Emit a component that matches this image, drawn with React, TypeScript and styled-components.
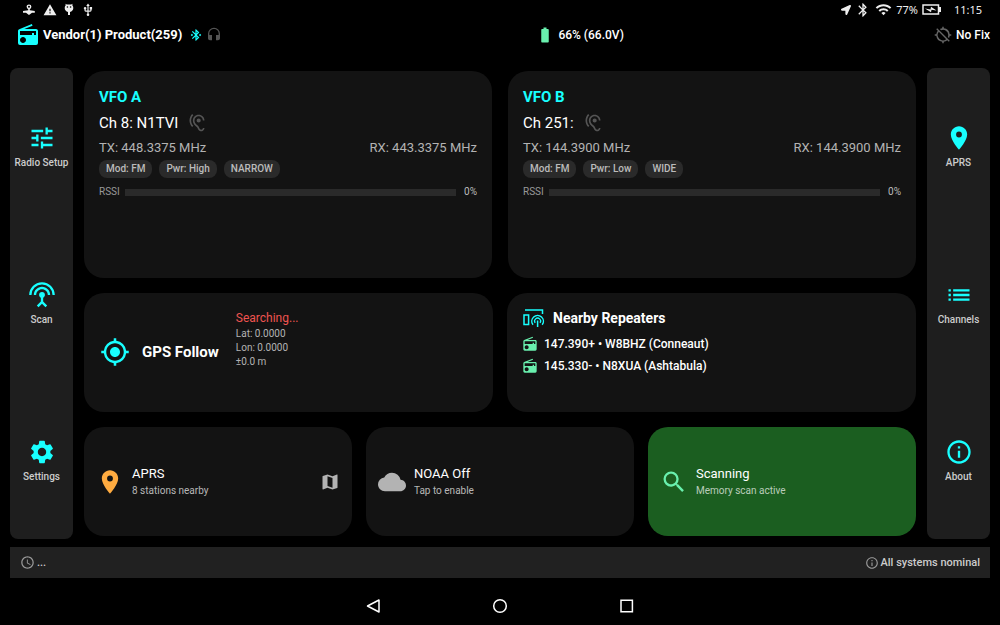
import React from "react";
import styled, { createGlobalStyle } from "styled-components";
import {
  MdRadio, MdBluetoothConnected, MdHeadset, MdLocationDisabled, MdTune, MdSettingsInputAntenna,
  MdSettings, MdLocationOn, MdList, MdInfoOutline, MdHearing, MdMyLocation, MdMap, MdCloud,
  MdSearch, MdSchedule, MdBatteryFull, MdBluetooth, MdWifi, MdWarning, MdUsb,
} from "react-icons/md";
import { FaLocationArrow } from "react-icons/fa";
import type { IconType } from "react-icons";

const cyan = "#18ffff";
const mint = "#69f0ae";

const GlobalStyle = createGlobalStyle`
  * { box-sizing: border-box; }
  body { margin: 0; background: #000; color: #fff; font-family: Roboto, sans-serif; }
  button { border: 0; padding: 0; margin: 0; font: inherit; color: inherit; background: none; text-align: left; cursor: pointer; }
  svg { display: block; flex: none; }
  h2, p { margin: 0; }
`;

const Screen = styled.div`
  min-height: 100vh;
  display: flex;
  flex-direction: column;
`;

const SystemBar = styled.div`
  height: 19px;
  padding: 0 18px 0 22px;
  display: flex;
  align-items: center;
  justify-content: space-between;
  font-family: "Noto Sans", sans-serif;
  font-size: 11px;
  color: #eee;
`;

const SystemGroup = styled.div<{ $gap: number }>`
  display: flex;
  align-items: center;
  gap: ${(p) => p.$gap}px;
`;

const Clock = styled.span`
  margin-left: 8px;
`;

const Header = styled.header`
  height: 31px;
  padding: 0 10px 0 16px;
  display: flex;
  align-items: center;
  justify-content: space-between;
`;

const HeaderGroup = styled.div<{ $gap: number }>`
  display: flex;
  align-items: center;
  gap: ${(p) => p.$gap}px;
  font-size: 12px;
  font-weight: 500;
`;

const Device = styled(HeaderGroup)`
  padding-right: 4px;
`;

const DeviceName = styled.span`
  font-size: 13px;
  font-weight: 700;
  margin-right: 4px;
`;

const Body = styled.div`
  flex: 1;
  display: flex;
  gap: 11px;
  padding: 18px 10px 8px;
`;

const Rail = styled.nav`
  width: 63px;
  flex: none;
  display: flex;
  flex-direction: column;
  border-radius: 8px;
  background: #1e1e1e;
`;

const RailButton = styled.button`
  flex: 1;
  display: flex;
  flex-direction: column;
  align-items: center;
  justify-content: center;
  gap: 4px;
  font-size: 10px;
  line-height: 14px;
  font-weight: 500;
  color: #ccc;
  svg { color: ${cyan}; }
`;

const Board = styled.main`
  flex: 1;
  min-width: 0;
  padding: 3px 0;
  display: grid;
  grid-template-rows: 19fr 11fr 10fr;
  gap: 15px;
`;

const BoardRow = styled.div<{ $columns: number; $gap: number }>`
  display: grid;
  grid-template-columns: repeat(${(p) => p.$columns}, minmax(0, 1fr));
  gap: ${(p) => p.$gap}px;
`;

const Card = styled.section`
  border-radius: 20px;
  background: #131313;
  padding: 16px 15px;
`;

const VfoTitle = styled.h2`
  font-size: 15px;
  line-height: 20px;
  font-weight: 700;
  color: ${cyan};
`;

const Channel = styled.div`
  display: flex;
  align-items: center;
  gap: 9px;
  height: 31px;
  font-size: 15px;
  svg { color: #555; }
`;

const Frequencies = styled.div`
  display: flex;
  justify-content: space-between;
  font-size: 13px;
  line-height: 20px;
  color: #b3b3b3;
`;

const Chips = styled.div`
  display: flex;
  gap: 7px;
  margin-top: 2px;
`;

const Chip = styled.span`
  padding: 0 7px;
  border-radius: 8px;
  background: #2a2a2a;
  font-size: 10px;
  line-height: 18px;
  font-weight: 500;
  color: #bbb;
`;

const Signal = styled.div`
  display: flex;
  align-items: center;
  margin-top: 6px;
  font-size: 10px;
  line-height: 16px;
  color: #999;
`;

const SignalTrack = styled.div`
  flex: 1;
  height: 7px;
  margin: 0 8px 0 5px;
  background: #2a2a2a;
`;

const SignalFill = styled.div`
  height: 100%;
  background: ${mint};
`;

const SignalValue = styled.span`
  color: #bbb;
`;

const GpsCard = styled.button`
  display: flex;
  align-items: center;
  padding: 16px;
  border-radius: 20px;
  background: #131313;
`;

const GpsTitle = styled.span`
  margin: 0 17px 0 12px;
  font-size: 15px;
  font-weight: 700;
`;

const GpsDetails = styled.span`
  align-self: flex-start;
  display: flex;
  flex-direction: column;
  font-size: 10px;
  line-height: 14px;
  color: #b3b3b3;
`;

const GpsState = styled.span`
  font-size: 12px;
  line-height: 18px;
  color: #ef5350;
`;

const RepeaterHeading = styled.div`
  display: flex;
  align-items: center;
  gap: 8px;
  height: 18px;
  margin-bottom: 6px;
`;

const RepeaterTitle = styled.h2`
  font-size: 14px;
  line-height: 18px;
  font-weight: 700;
`;

const Repeater = styled.div`
  display: flex;
  align-items: center;
  gap: 6px;
  height: 22px;
  font-size: 12px;
  font-weight: 500;
  svg { color: ${mint}; }
`;

const Tile = styled.button<{ $active?: boolean }>`
  display: flex;
  align-items: center;
  gap: 8px;
  padding: 0 12px;
  border-radius: 20px;
  background: ${(p) => (p.$active ? "#1b5e20" : "#131313")};
`;

const TileText = styled.span`
  flex: 1;
  display: flex;
  flex-direction: column;
`;

const TileTitle = styled.span`
  font-size: 13px;
  line-height: 18px;
`;

const TileNote = styled.span`
  font-size: 10px;
  line-height: 16px;
  color: rgba(255, 255, 255, 0.7);
`;

const Footer = styled.footer`
  height: 31px;
  margin: 0 10px;
  padding: 0 10px;
  display: flex;
  align-items: center;
  justify-content: space-between;
  background: #212121;
  font-size: 11px;
  font-weight: 500;
  color: #ccc;
`;

const FooterItem = styled.div`
  display: flex;
  align-items: center;
  gap: 2px;
  svg { color: #999; }
`;

const SystemNav = styled.nav`
  height: 47px;
  padding-top: 8px;
  display: flex;
  justify-content: center;
  gap: 107px;
`;

const NavButton = styled.button`
  width: 20px;
  height: 40px;
  display: flex;
  align-items: center;
  justify-content: center;
`;

function RepeaterIcon() {
  return (
    <svg width="23" height="18" viewBox="0 0 23 18" fill="none" stroke={cyan} strokeWidth="1.500" aria-hidden="true">
      <path d="M3 1h17.500v4" />
      <path d="M2 6h4.600v9.500H2z" />
      <path d="M11 15.800a5.800 5.800 0 1 1 9.200 0" />
      <path d="M13.200 13.900a3 3 0 1 1 4.800 0" strokeWidth="1.300" />
      <path d="M15.600 11.500v6.500" />
    </svg>
  );
}

function DebugIcon() {
  return (
    <svg width="14" height="12" viewBox="0 0 14 12" aria-hidden="true">
      <circle cx="7" cy="2.800" r="1.700" fill="none" stroke="#eee" strokeWidth="1.400" />
      <path d="M6.200 4h1.600v2.300l5 .7v1.800H10L7 11 4 8.800H1V7l5.200-.7z" fill="#eee" />
    </svg>
  );
}

function AndroidHeadIcon() {
  return (
    <svg width="10" height="13" viewBox="0 0 10 13" aria-hidden="true">
      <path d="M1.500.8l1.300.7h4.400l1.300-.7-.2 1.500C9 3 9.300 4 9.300 5c0 2-1.400 3.600-3.300 3.900V12H4V8.900C2.100 8.600.7 7 .7 5c0-1 .3-2 1-2.700z" fill="#eee" />
      <circle cx="3.400" cy="4" r=".8" fill="#000" />
      <circle cx="6.600" cy="4" r=".8" fill="#000" />
    </svg>
  );
}

function ChargingIcon() {
  return (
    <svg width="20" height="11" viewBox="0 0 20 11" fill="none" aria-hidden="true">
      <path d="M1 1h15.500v9H1z" stroke="#eee" strokeWidth="1.500" />
      <path d="M18 3v5" stroke="#eee" strokeWidth="2" />
      <path d="M3 4.500l5.500 1 .5-2.700 5.500 3.700-5-.8-.5 2.500z" fill="#eee" />
    </svg>
  );
}

interface RailItem { label: string; icon: IconType }

const leftItems: RailItem[] = [
  { label: "Radio Setup", icon: MdTune },
  { label: "Scan", icon: MdSettingsInputAntenna },
  { label: "Settings", icon: MdSettings },
];
const rightItems: RailItem[] = [
  { label: "APRS", icon: MdLocationOn },
  { label: "Channels", icon: MdList },
  { label: "About", icon: MdInfoOutline },
];

function SideRail({ items, name }: { items: RailItem[]; name: string }) {
  return (
    <Rail aria-label={name}>
      {items.map(({ label, icon: Icon }) => (
        <RailButton key={label} type="button">
          <Icon size={28} />
          {label}
        </RailButton>
      ))}
    </Rail>
  );
}

interface VfoProps { name: string; channel: string; tx: string; rx: string; chips: string[]; rssi: number }

function Vfo({ name, channel, tx, rx, chips, rssi }: VfoProps) {
  return (
    <Card>
      <VfoTitle>{name}</VfoTitle>
      <Channel>{channel}<MdHearing size={20} /></Channel>
      <Frequencies><span>TX: {tx} MHz</span><span>RX: {rx} MHz</span></Frequencies>
      <Chips>{chips.map((c) => <Chip key={c}>{c}</Chip>)}</Chips>
      <Signal>
        RSSI
        <SignalTrack role="progressbar" aria-label="RSSI" aria-valuenow={rssi}>
          <SignalFill style={{ width: `${rssi}%` }} />
        </SignalTrack>
        <SignalValue>{rssi}%</SignalValue>
      </Signal>
    </Card>
  );
}

export default function App() {
  return (
    <Screen>
      <GlobalStyle />
      <SystemBar>
        <SystemGroup $gap={7}>
          <DebugIcon />
          <MdWarning size={14} />
          <AndroidHeadIcon />
          <MdUsb size={14} />
        </SystemGroup>
        <SystemGroup $gap={4}>
          <FaLocationArrow size={10} />
          <MdBluetooth size={16} />
          <MdWifi size={17} />
          <span>77%</span>
          <ChargingIcon />
          <Clock>11:15</Clock>
        </SystemGroup>
      </SystemBar>
      <Header>
        <Device $gap={3}>
          <MdRadio size={24} color={cyan} />
          <DeviceName>Vendor(1) Product(259)</DeviceName>
          <MdBluetoothConnected size={14} color={cyan} />
          <MdHeadset size={16} color="#555" />
        </Device>
        <HeaderGroup $gap={4}>
          <MdBatteryFull size={18} color={mint} />
          66% (66.0V)
        </HeaderGroup>
        <HeaderGroup $gap={4}>
          <MdLocationDisabled size={18} color="#666" />
          No Fix
        </HeaderGroup>
      </Header>
      <Body>
        <SideRail items={leftItems} name="Radio" />
        <Board>
          <BoardRow $columns={2} $gap={16}>
            <Vfo name="VFO A" channel="Ch 8: N1TVI" tx="448.3375" rx="443.3375" chips={["Mod: FM", "Pwr: High", "NARROW"]} rssi={0} />
            <Vfo name="VFO B" channel="Ch 251:" tx="144.3900" rx="144.3900" chips={["Mod: FM", "Pwr: Low", "WIDE"]} rssi={0} />
          </BoardRow>
          <BoardRow $columns={2} $gap={14}>
            <GpsCard type="button">
              <MdMyLocation size={30} color={cyan} />
              <GpsTitle>GPS Follow</GpsTitle>
              <GpsDetails>
                <GpsState>Searching...</GpsState>
                <span>Lat: 0.0000</span>
                <span>Lon: 0.0000</span>
                <span>±0.0 m</span>
              </GpsDetails>
            </GpsCard>
            <Card>
              <RepeaterHeading>
                <RepeaterIcon />
                <RepeaterTitle>Nearby Repeaters</RepeaterTitle>
              </RepeaterHeading>
              <Repeater><MdRadio size={16} />147.390+ • W8BHZ (Conneaut)</Repeater>
              <Repeater><MdRadio size={16} />145.330- • N8XUA (Ashtabula)</Repeater>
            </Card>
          </BoardRow>
          <BoardRow $columns={3} $gap={14}>
            <Tile type="button">
              <MdLocationOn size={28} color="#ffab40" />
              <TileText><TileTitle>APRS</TileTitle><TileNote>8 stations nearby</TileNote></TileText>
              <MdMap size={20} color="#b3b3b3" />
            </Tile>
            <Tile type="button">
              <MdCloud size={28} color="#b3b3b3" />
              <TileText><TileTitle>NOAA Off</TileTitle><TileNote>Tap to enable</TileNote></TileText>
            </Tile>
            <Tile type="button" $active>
              <MdSearch size={28} color={mint} />
              <TileText><TileTitle>Scanning</TileTitle><TileNote>Memory scan active</TileNote></TileText>
            </Tile>
          </BoardRow>
        </Board>
        <SideRail items={rightItems} name="Lists" />
      </Body>
      <Footer>
        <FooterItem><MdSchedule size={15} />...</FooterItem>
        <FooterItem><MdInfoOutline size={14} />All systems nominal</FooterItem>
      </Footer>
      <SystemNav aria-label="System">
        <NavButton type="button" aria-label="Back">
          <svg width="16" height="16" viewBox="0 0 16 16" fill="none" stroke="#fff" strokeWidth="1.500"><path d="M14 2v12L2.500 8z" strokeLinejoin="round" /></svg>
        </NavButton>
        <NavButton type="button" aria-label="Home">
          <svg width="16" height="16" viewBox="0 0 16 16" fill="none" stroke="#fff" strokeWidth="1.500"><circle cx="8" cy="8" r="6.300" /></svg>
        </NavButton>
        <NavButton type="button" aria-label="Recent apps">
          <svg width="16" height="16" viewBox="0 0 16 16" fill="none" stroke="#fff" strokeWidth="1.500"><path d="M2 2.300h11.400v11.400H2z" /></svg>
        </NavButton>
      </SystemNav>
    </Screen>
  );
}
